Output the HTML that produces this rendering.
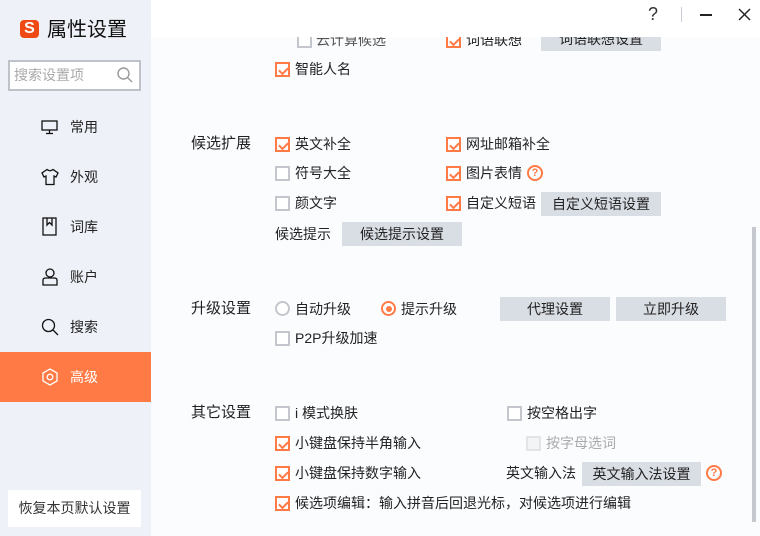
<!DOCTYPE html>
<html><head><meta charset="utf-8"><style>
*{margin:0;padding:0;box-sizing:border-box}
body{width:760px;height:536px;overflow:hidden;background:#fbfcfe;font-family:"Liberation Sans","Noto Sans CJK SC",sans-serif;color:#222;position:relative}
.a{position:absolute;white-space:nowrap}
.side{position:absolute;left:0;top:0;width:151px;height:536px;background:#eef1f7}
.t{font-size:14px;line-height:20px}
.sec{font-size:15px;line-height:20px}
.cb{position:absolute;width:15px;height:15px;border:2px solid #c3c6cc;background:#fff}
.cb.on{border-color:#ff7a45}
.cb.on::after{content:"";position:absolute;left:2px;top:0px;width:7px;height:4px;border-left:2px solid #ff7a45;border-bottom:2px solid #ff7a45;transform:translate(0,3px) rotate(-45deg)}
.btn{position:absolute;height:24px;background:#d9dde4;font-size:14px;line-height:24px;text-align:center}
.nav{position:absolute;left:70px;font-size:14px;line-height:20px}
.q{position:absolute;width:16px;height:16px;border:2px solid #ff7a45;border-radius:50%;color:#ff7a45;font-size:11px;font-weight:bold;line-height:12px;text-align:center}
</style></head><body>
<div class="side"></div>
<div class="a" style="left:20px;top:20px;width:19px;height:18px;background:#f04a14;border-radius:4px;color:#fff;font-weight:bold;font-size:16px;line-height:18px;text-align:center">S</div>
<div class="a" style="left:47px;top:17px;font-size:20px;line-height:26px;color:#111">属性设置</div>
<div class="a" style="left:8px;top:60px;width:133px;height:31px;border:2px solid #bfc2c8;background:#fff"></div>
<div class="a" style="left:14px;top:65px;font-size:14px;line-height:20px;color:#aaa">搜索设置项</div>
<svg class="a" style="left:116px;top:66px" width="18" height="18"><circle cx="7.5" cy="7.5" r="5.5" fill="none" stroke="#999" stroke-width="1.4"/><line x1="11.5" y1="11.5" x2="16" y2="16" stroke="#999" stroke-width="1.4"/></svg>
<svg class="a" style="left:41px;top:119px" width="18" height="16" fill="none" stroke="#111" stroke-width="1.3"><rect x="1" y="2" width="15" height="9"/><line x1="8.5" y1="11" x2="8.5" y2="14"/><line x1="5" y1="14.5" x2="12" y2="14.5"/></svg>
<div class="nav" style="top:117px">常用</div>
<svg class="a" style="left:41px;top:168px" width="18" height="18" fill="none" stroke="#111" stroke-width="1.3"><path d="M6 1.5 L1 5 L3 9 L5 8 L5 16.5 L13 16.5 L13 8 L15 9 L17 5 L12 1.5 Q9 4 6 1.5Z"/></svg>
<div class="nav" style="top:167px">外观</div>
<svg class="a" style="left:42px;top:217px" width="16" height="20" fill="none" stroke="#111" stroke-width="1.3"><rect x="1" y="1" width="13" height="17"/><path d="M5 1 V8 L7.5 5.5 L10 8 V1" /></svg>
<div class="nav" style="top:217px">词库</div>
<svg class="a" style="left:41px;top:268px" width="18" height="18" fill="none" stroke="#111" stroke-width="1.3"><circle cx="9" cy="5" r="4"/><path d="M2 17 V12 Q2 10 5 10 H13 Q16 10 16 12 V17 Z"/></svg>
<div class="nav" style="top:267px">账户</div>
<svg class="a" style="left:41px;top:318px" width="18" height="18" fill="none" stroke="#111" stroke-width="1.3"><circle cx="7.5" cy="7.5" r="6"/><line x1="12" y1="12" x2="17" y2="17"/></svg>
<div class="nav" style="top:317px">搜索</div>
<div class="a" style="left:0;top:352px;width:151px;height:50px;background:#ff7a45"></div>
<svg class="a" style="left:41px;top:368px" width="18" height="18" fill="none" stroke="#fff" stroke-width="1.3"><path d="M9 1 L16 5 L16 13 L9 17 L2 13 L2 5Z"/><circle cx="9" cy="9" r="2.8"/></svg>
<div class="nav" style="top:367px;color:#fff">高级</div>
<div class="a" style="left:8px;top:490px;width:133px;height:37px;background:#fff;font-size:14px;line-height:37px;text-align:center;color:#333">恢复本页默认设置</div>

<div class="cb" style="left:297px;top:33px"></div><div class="a t" style="left:316px;top:30px;color:#555">云计算候选</div>
<div class="cb on" style="left:446px;top:33px"></div><div class="a t" style="left:466px;top:30px">词语联想</div>
<div class="btn" style="left:541px;top:27px;width:120px">词语联想设置</div>
<div class="a" style="left:151px;top:0;width:609px;height:37px;background:#fff"></div>
<div class="a" style="left:648px;top:3px;font-size:18px;line-height:22px;color:#333">?</div>
<div class="a" style="left:681px;top:7px;width:1px;height:15px;background:#c8ccd4"></div>
<div class="a" style="left:700px;top:14px;width:12px;height:1.5px;background:#222"></div>
<svg class="a" style="left:738px;top:8px" width="13" height="13" stroke="#222" stroke-width="1.4"><line x1="1" y1="1" x2="12" y2="12"/><line x1="12" y1="1" x2="1" y2="12"/></svg>

<div class="cb on" style="left:275px;top:62px"></div><div class="a t" style="left:295px;top:59px">智能人名</div>

<div class="a sec" style="left:191px;top:134px">候选扩展</div>
<div class="cb on" style="left:275px;top:137px"></div><div class="a t" style="left:295px;top:134px">英文补全</div>
<div class="cb on" style="left:446px;top:137px"></div><div class="a t" style="left:466px;top:134px">网址邮箱补全</div>
<div class="cb" style="left:275px;top:166px"></div><div class="a t" style="left:295px;top:163px">符号大全</div>
<div class="cb on" style="left:446px;top:166px"></div><div class="a t" style="left:466px;top:163px">图片表情</div>
<div class="q" style="left:527px;top:165px">?</div>
<div class="cb" style="left:275px;top:196px"></div><div class="a t" style="left:295px;top:193px">颜文字</div>
<div class="cb on" style="left:446px;top:196px"></div><div class="a t" style="left:466px;top:193px">自定义短语</div>
<div class="btn" style="left:541px;top:192px;width:120px">自定义短语设置</div>
<div class="a t" style="left:275px;top:224px">候选提示</div>
<div class="btn" style="left:342px;top:222px;width:120px">候选提示设置</div>

<div class="a sec" style="left:191px;top:299px">升级设置</div>
<div class="a" style="left:275px;top:301px;width:15px;height:15px;border:2px solid #c3c6cc;border-radius:50%;background:#fff"></div>
<div class="a t" style="left:295px;top:299px">自动升级</div>
<div class="a" style="left:381px;top:301px;width:15px;height:15px;border:2px solid #ff7a45;border-radius:50%;background:#fff"><div style="position:absolute;left:2.5px;top:2.5px;width:6px;height:6px;border-radius:50%;background:#ff7a45"></div></div>
<div class="a t" style="left:401px;top:299px">提示升级</div>
<div class="btn" style="left:500px;top:297px;width:110px">代理设置</div>
<div class="btn" style="left:616px;top:297px;width:110px">立即升级</div>
<div class="cb" style="left:275px;top:331px"></div><div class="a t" style="left:295px;top:328px">P2P升级加速</div>

<div class="a sec" style="left:191px;top:403px">其它设置</div>
<div class="cb" style="left:275px;top:406px"></div><div class="a t" style="left:295px;top:403px">i 模式换肤</div>
<div class="cb" style="left:507px;top:406px"></div><div class="a t" style="left:527px;top:403px">按空格出字</div>
<div class="cb on" style="left:275px;top:436px"></div><div class="a t" style="left:295px;top:433px">小键盘保持半角输入</div>
<div class="cb" style="left:526px;top:436px;border-color:#e2e4e8;background:#f3f4f6"></div><div class="a t" style="left:546px;top:433px;color:#aaa">按字母选词</div>
<div class="cb on" style="left:275px;top:466px"></div><div class="a t" style="left:295px;top:463px">小键盘保持数字输入</div>
<div class="a t" style="left:506px;top:463px">英文输入法</div>
<div class="btn" style="left:582px;top:462px;width:119px">英文输入法设置</div>
<div class="q" style="left:706px;top:465px">?</div>
<div class="cb on" style="left:275px;top:496px"></div><div class="a t" style="left:295px;top:493px">候选项编辑：输入拼音后回退光标，对候选项进行编辑</div>

<div class="a" style="left:752px;top:227px;width:4px;height:295px;background:#c6c8d0"></div>
</body></html>
